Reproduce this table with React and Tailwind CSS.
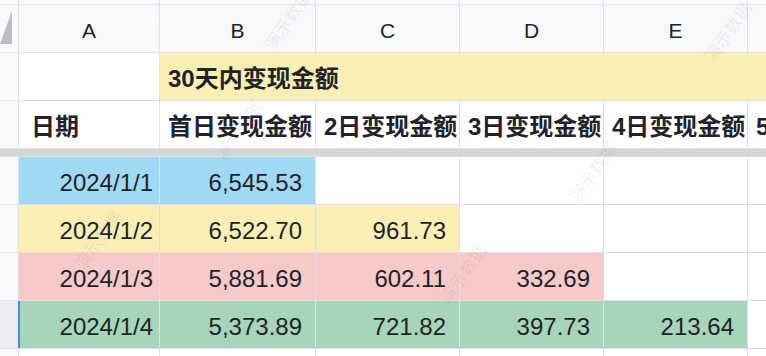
import React from 'react'

const cols = 'grid grid-cols-[18px_140px_155px_143px_143px_143px_1fr] gap-px'

const rows = [
  { bg: 'bg-[#9fd9f6]', cells: ['2024/1/1', '6,545.53'] },
  { bg: 'bg-[#fcefb6]', cells: ['2024/1/2', '6,522.70', '961.73'] },
  { bg: 'bg-[#f7cac9]', cells: ['2024/1/3', '5,881.69', '602.11', '332.69'] },
  { bg: 'bg-[#a6d5b9]', cells: ['2024/1/4', '5,373.89', '721.82', '397.73', '213.64'], active: true },
]

const marks = [
  { x: 205, y: 118 },
  { x: 255, y: 8 },
  { x: 695, y: 20 },
  { x: 560, y: 160 },
  { x: 430, y: 262 },
  { x: 65, y: 228 },
]

export default function App() {
  return (
    <div className="relative w-full h-[356px] overflow-hidden bg-[#dfe0e4] flex flex-col gap-px font-['Liberation_Sans','Noto_Sans_CJK_SC',sans-serif] text-[#1f2329]">
      {/* top strip */}
      <div className={`${cols} h-[4px]`}>
        {[0, 1, 2, 3, 4, 5, 6].map((i) => <div key={i} className="bg-[#f8f9fb]" />)}
      </div>

      {/* column letters */}
      <div className={`${cols} h-[47px]`}>
        <div className="bg-[#f8f9fb] flex items-center">
          <svg width="13" height="34" viewBox="0 0 13 34" className="mt-[-1px]">
            <polygon points="0,33 12,33 12,0" fill="#bcbdc0" />
          </svg>
        </div>
        {['A', 'B', 'C', 'D', 'E', ''].map((l, i) => (
          <div key={i} className="bg-[#f8f9fb] flex items-center justify-center pt-1 text-[21px]">{l}</div>
        ))}
      </div>

      {/* merged title row */}
      <div className={`${cols} h-[47px]`}>
        <div className="bg-[#f8f9fb]" />
        <div className="bg-white" />
        <div className="col-span-5 bg-[#fcefb4] flex items-center pl-2 pt-1 text-[24px] font-bold whitespace-nowrap">30天内变现金额</div>
      </div>

      {/* column titles */}
      <div className={`${cols} h-[47px]`}>
        <div className="bg-[#f8f9fb]" />
        <div className="bg-white flex items-center pl-3 pt-1 text-[24px] font-bold">日期</div>
        {['首日变现金额', '2日变现金额', '3日变现金额', '4日变现金额', '5日变现金额'].map((t, i) => (
          <div key={i} className="bg-white flex items-center pl-2 pt-1 text-[24px] font-bold whitespace-nowrap overflow-hidden">{t}</div>
        ))}
      </div>

      {/* freeze line */}
      <div className="h-[7px] bg-[#d6d6d6]" />

      {rows.map((r, ri) => (
        <div key={ri} className={`${cols} h-[47px]`}>
          <div className={r.active ? 'bg-[#ebedf0]' : 'bg-[#f8f9fb]'} />
          {[0, 1, 2, 3, 4, 5].map((ci) => {
            const v = r.cells[ci]
            return (
              <div
                key={ci}
                className={`relative flex items-center justify-end pt-1 text-[24px] ${v ? r.bg : 'bg-white'} ${ci === 0 ? 'pr-[6px]' : 'pr-[13px]'}`}
              >
                {r.active && ci === 0 && <span className="absolute left-[-1px] top-0 bottom-0 w-[2px] bg-[#4a86f7]" />}
                {v}
              </div>
            )
          })}
        </div>
      ))}

      {/* bottom strip */}
      <div className={`${cols} flex-1`}>
        <div className="bg-[#f8f9fb]" />
        {[0, 1, 2, 3, 4, 5].map((i) => <div key={i} className="bg-white" />)}
      </div>

      {/* watermark */}
      {marks.map((m, i) => (
        <span
          key={i}
          className="absolute pointer-events-none text-[17px] text-black/[0.07] -rotate-[55deg] whitespace-nowrap"
          style={{ left: m.x, top: m.y }}
        >
          演示数据
        </span>
      ))}
    </div>
  )
}
